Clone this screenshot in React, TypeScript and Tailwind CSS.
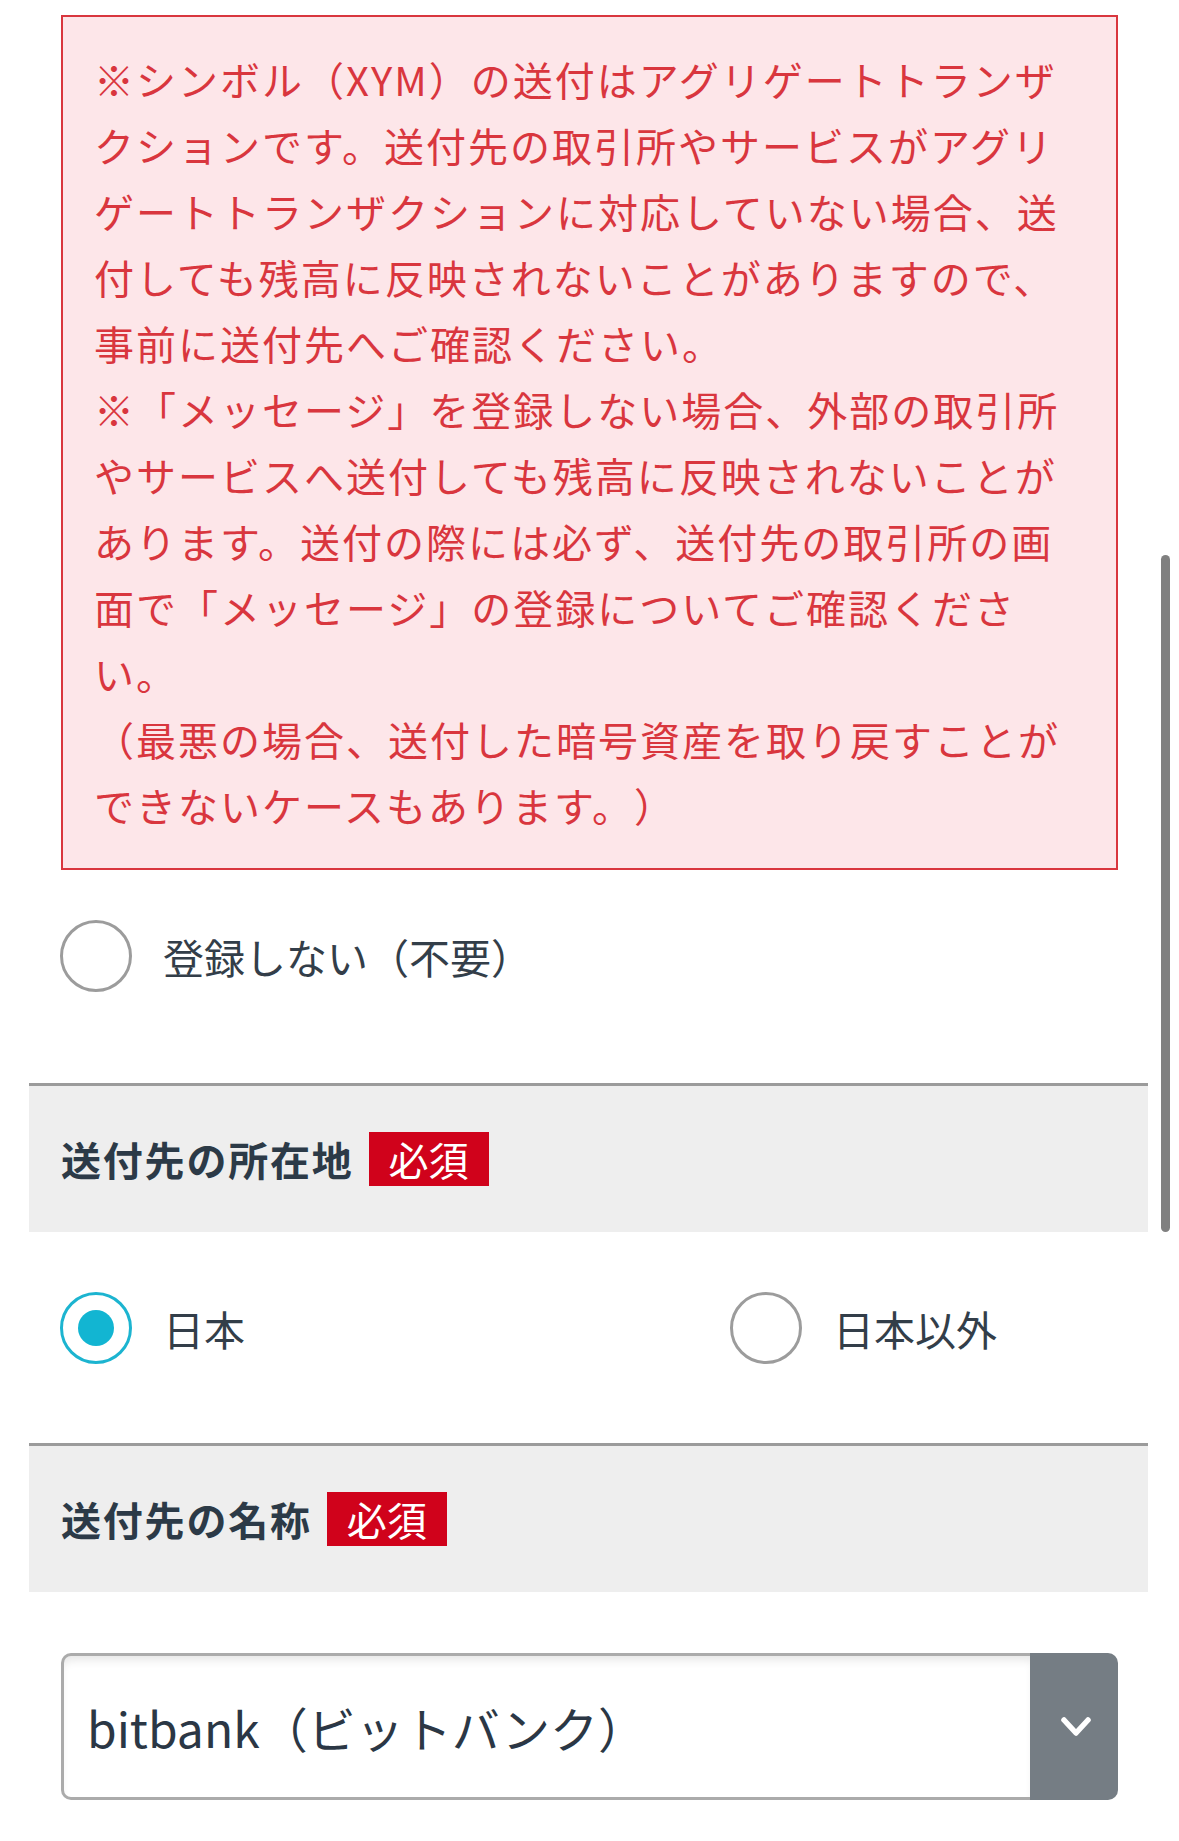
import React from "react";

const warningLines = [
  "※シンボル（XYM）の送付はアグリゲートトランザ",
  "クションです。送付先の取引所やサービスがアグリ",
  "ゲートトランザクションに対応していない場合、送",
  "付しても残高に反映されないことがありますので、",
  "事前に送付先へご確認ください。",
  "※「メッセージ」を登録しない場合、外部の取引所",
  "やサービスへ送付しても残高に反映されないことが",
  "あります。送付の際には必ず、送付先の取引所の画",
  "面で「メッセージ」の登録についてご確認くださ",
  "い。",
  "（最悪の場合、送付した暗号資産を取り戻すことが",
  "できないケースもあります。）",
];

function Radio({ checked, label }: { checked?: boolean; label: string }) {
  return (
    <div className="flex items-center">
      <div
        className={
          checked
            ? "flex h-[72px] w-[72px] shrink-0 items-center justify-center rounded-full border-[3px] border-[#1cb4d0] bg-white"
            : "flex h-[72px] w-[72px] shrink-0 items-center justify-center rounded-full border-[3px] border-[#9c9c9c] bg-white"
        }
      >
        {checked && <div className="h-[36px] w-[36px] rounded-full bg-[#12b5d2]" />}
      </div>
      <span className="ml-[31px] whitespace-nowrap text-[41px] leading-none text-[#333e49]">{label}</span>
    </div>
  );
}

function SectionHeader({ title }: { title: string }) {
  return (
    <div className="ml-[29px] flex h-[149px] w-[1119px] items-center border-t-[3px] border-[#9b9b9b] bg-[#eeeeee] pl-[32px]">
      <span className="whitespace-nowrap text-[40px] font-bold leading-none tracking-[1.8px] text-[#2c3a47]">{title}</span>
      <span className="ml-[15px] flex h-[54px] w-[120px] items-center justify-center bg-[#d0021b] text-[40px] leading-none text-white">
        必須
      </span>
    </div>
  );
}

export default function App() {
  return (
    <div
      className="relative h-[1841px] w-[1179px] overflow-hidden bg-white [text-spacing-trim:space-all]"
      style={{ fontFamily: '"Noto Sans CJK JP", "Noto Sans", sans-serif' }}
    >
      <div className="pt-[15px]">
        <div className="ml-[61px] w-[1057px] border-2 border-[#d9363e] bg-[#fde6e9] pb-[30px] pl-[31px] pr-[10px] pt-[29px] text-[40px] leading-[66px] tracking-[2px] text-[#d9363e]">
          {warningLines.map((l, i) => (
            <div key={i} className="whitespace-nowrap">
              {l}
            </div>
          ))}
        </div>

        <div className="ml-[60px] mt-[50px]">
          <Radio label="登録しない（不要）" />
        </div>

        <div className="mt-[91px]">
          <SectionHeader title="送付先の所在地" />
        </div>

        <div className="ml-[60px] mt-[60px] flex">
          <div className="w-[670px]">
            <Radio checked label="日本" />
          </div>
          <Radio label="日本以外" />
        </div>

        <div className="mt-[79px]">
          <SectionHeader title="送付先の名称" />
        </div>

        <div className="ml-[61px] mt-[61px] flex h-[147px] w-[1057px]">
          <div className="flex flex-1 items-center rounded-l-[10px] border-[3px] border-r-0 border-[#ababab] bg-white pl-[23px] shadow-[inset_0_8px_10px_-4px_rgba(0,0,0,0.10)]">
            <span className="whitespace-nowrap text-[48px] leading-none text-[#2b3745]">bitbank（ビットバンク）</span>
          </div>
          <div className="flex w-[88px] items-center justify-center rounded-r-[10px] bg-[#757d84]">
            <svg width="34" height="24" viewBox="0 0 34 24" fill="none" className="ml-[4px]">
              <path d="M5 5 L17 18 L29 5" stroke="white" strokeWidth="5.5" strokeLinecap="round" strokeLinejoin="round" />
            </svg>
          </div>
        </div>
      </div>

      <div className="absolute left-[1161px] top-[555px] h-[677px] w-[9px] rounded-full bg-[#808080]" />
    </div>
  );
}
